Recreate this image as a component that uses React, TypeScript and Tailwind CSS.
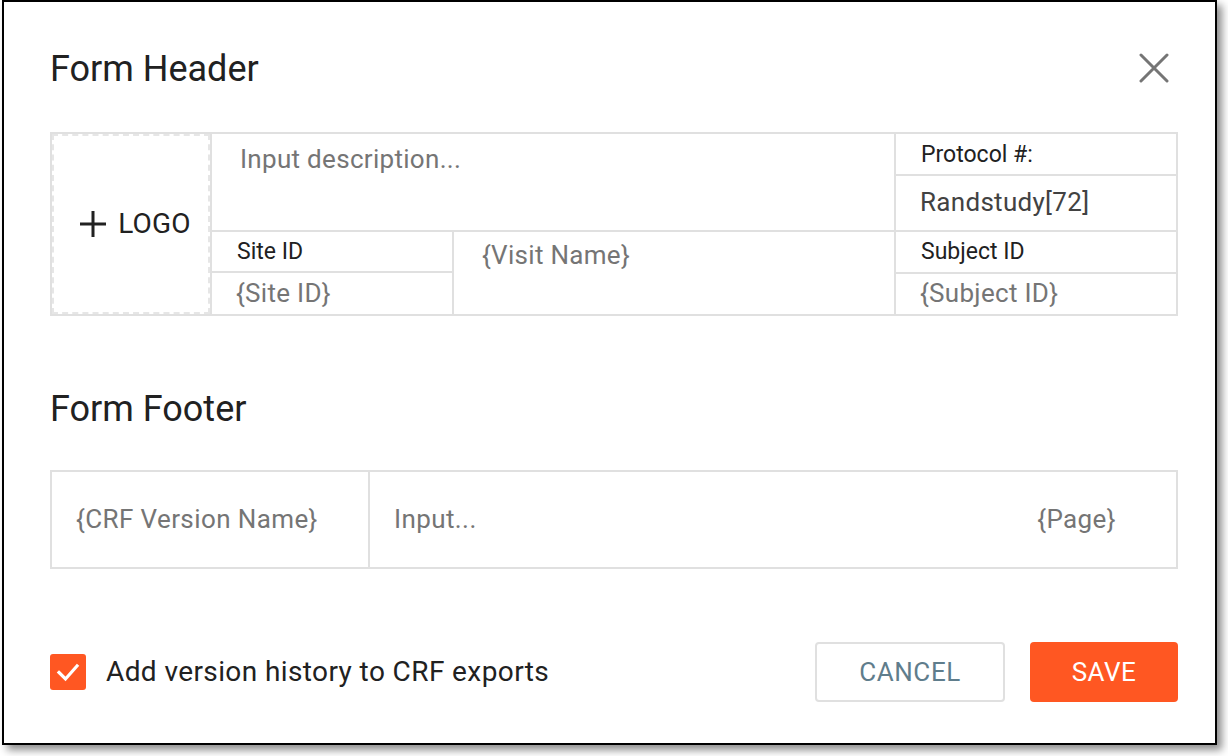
import React from "react";

const font = { fontFamily: "Roboto, 'Noto Sans', sans-serif" };

const CloseIcon = () => (
  <svg width="30" height="30" viewBox="0 0 30 30" className="text-[#757575]">
    <path
      d="M2 2 L28 28 M28 2 L2 28"
      stroke="currentColor"
      strokeWidth="3"
      strokeLinecap="round"
      fill="none"
    />
  </svg>
);

const PlusIcon = () => (
  <svg width="28" height="28" viewBox="0 0 28 28" className="text-[#212121]">
    <path d="M14 1 V27 M1 14 H27" stroke="currentColor" strokeWidth="3" fill="none" />
  </svg>
);

const CheckIcon = () => (
  <svg width="24" height="24" viewBox="0 0 24 24">
    <path
      d="M3 12.5 L9.5 19 L21 6"
      stroke="white"
      strokeWidth="3.2"
      strokeLinecap="square"
      fill="none"
    />
  </svg>
);

// header table: logo cell, description + site/visit, protocol + subject column
const HeaderTable = () => (
  <div className="flex h-[184px] border-2 border-[#e0e0e0]">
    {/* Logo */}
    <div className="w-[158px] border-2 border-dashed border-[#e6e6e6] flex items-center justify-center gap-[11px] pl-[8px]">
      <PlusIcon />
      <span className="text-[28px] leading-[1.2] tracking-[0.2px] text-[#212121]">LOGO</span>
    </div>

    {/* Middle */}
    <div className="flex-1 flex flex-col border-l-2 border-[#e0e0e0]">
      <div className="h-[96px] pl-[28px] pt-[10px] text-[26px] leading-[1.2] tracking-[0.3px] text-[#757575]">
        Input description...
      </div>
      <div className="flex-1 flex border-t-2 border-[#e0e0e0]">
        <div className="w-[242px] flex flex-col border-r-2 border-[#e0e0e0]">
          <div className="h-[39px] flex items-center pl-[25px] text-[23px] leading-[1.2] text-[#212121]">
            Site ID
          </div>
          <div className="flex-1 flex items-center pl-[24px] border-t-2 border-[#e0e0e0] text-[26px] leading-[1.2] tracking-[0.3px] text-[#757575]">
            {"{Site ID}"}
          </div>
        </div>
        <div className="flex-1 pl-[28px] pt-[8px] text-[26px] leading-[1.2] tracking-[0.3px] text-[#757575]">
          {"{Visit Name}"}
        </div>
      </div>
    </div>

    {/* Right */}
    <div className="w-[282px] flex flex-col border-l-2 border-[#e0e0e0]">
      <div className="h-[40px] flex items-center pl-[25px] pt-[2px] text-[23px] leading-[1.2] text-[#212121]">
        Protocol #:
      </div>
      <div className="h-[56px] flex items-center pl-[24px] border-t-2 border-[#e0e0e0] text-[26px] leading-[1.2] tracking-[0.3px] text-[#424242]">
        Randstudy[72]
      </div>
      <div className="h-[42px] flex items-center pl-[25px] border-t-2 border-[#e0e0e0] text-[23px] leading-[1.2] text-[#212121]">
        Subject ID
      </div>
      <div className="flex-1 flex items-center pl-[24px] border-t-2 border-[#e0e0e0] text-[26px] leading-[1.2] tracking-[0.3px] text-[#757575]">
        {"{Subject ID}"}
      </div>
    </div>
  </div>
);

const FooterTable = () => (
  <div className="flex h-[99px] border-2 border-[#e0e0e0] text-[26px] leading-[1.2] tracking-[0.4px] text-[#757575]">
    <div className="w-[318px] flex items-center pl-[24px] border-r-2 border-[#e0e0e0]">
      {"{CRF Version Name}"}
    </div>
    <div className="flex-1 flex items-center justify-between pl-[24px] pr-[60px]">
      <span>Input...</span>
      <span>{"{Page}"}</span>
    </div>
  </div>
);

export default function App() {
  return (
    <div className="w-[1228px] h-[756px] bg-white" style={font}>
      <div className="ml-[2px] w-[1215px] h-[745px] bg-white border-2 border-black shadow-[5px_5px_8px_rgba(0,0,0,0.45)] pl-[46px] pr-[37px] pt-[43px]">
        {/* Form Header */}
        <div className="flex items-start justify-between h-[87px]">
          <h1 className="mt-[3px] text-[36px] leading-[1.2] text-[#212121]">Form Header</h1>
          <div className="mt-[8px] mr-[9px]">
            <CloseIcon />
          </div>
        </div>
        <HeaderTable />

        {/* Form Footer */}
        <h2 className="mt-[72px] h-[82px] text-[36px] leading-[1.2] text-[#212121]">
          Form Footer
        </h2>
        <FooterTable />

        {/* Bottom actions */}
        <div className="mt-[73px] flex items-center justify-between">
          <label className="flex items-center gap-[20px]">
            <span className="w-[36px] h-[36px] rounded-[3px] bg-[#ff5722] flex items-center justify-center">
              <CheckIcon />
            </span>
            <span className="text-[28px] leading-[1.2] tracking-[0.4px] text-[#212121]">
              Add version history to CRF exports
            </span>
          </label>
          <div className="flex gap-[25px]">
            <button className="w-[190px] h-[60px] rounded-[4px] border-2 border-[#e0e0e0] text-[26px] tracking-[0.6px] text-[#5f7d8c] bg-white">
              CANCEL
            </button>
            <button className="w-[148px] h-[60px] rounded-[4px] bg-[#ff5722] text-[26px] tracking-[0.5px] text-white">
              SAVE
            </button>
          </div>
        </div>
      </div>
    </div>
  );
}
